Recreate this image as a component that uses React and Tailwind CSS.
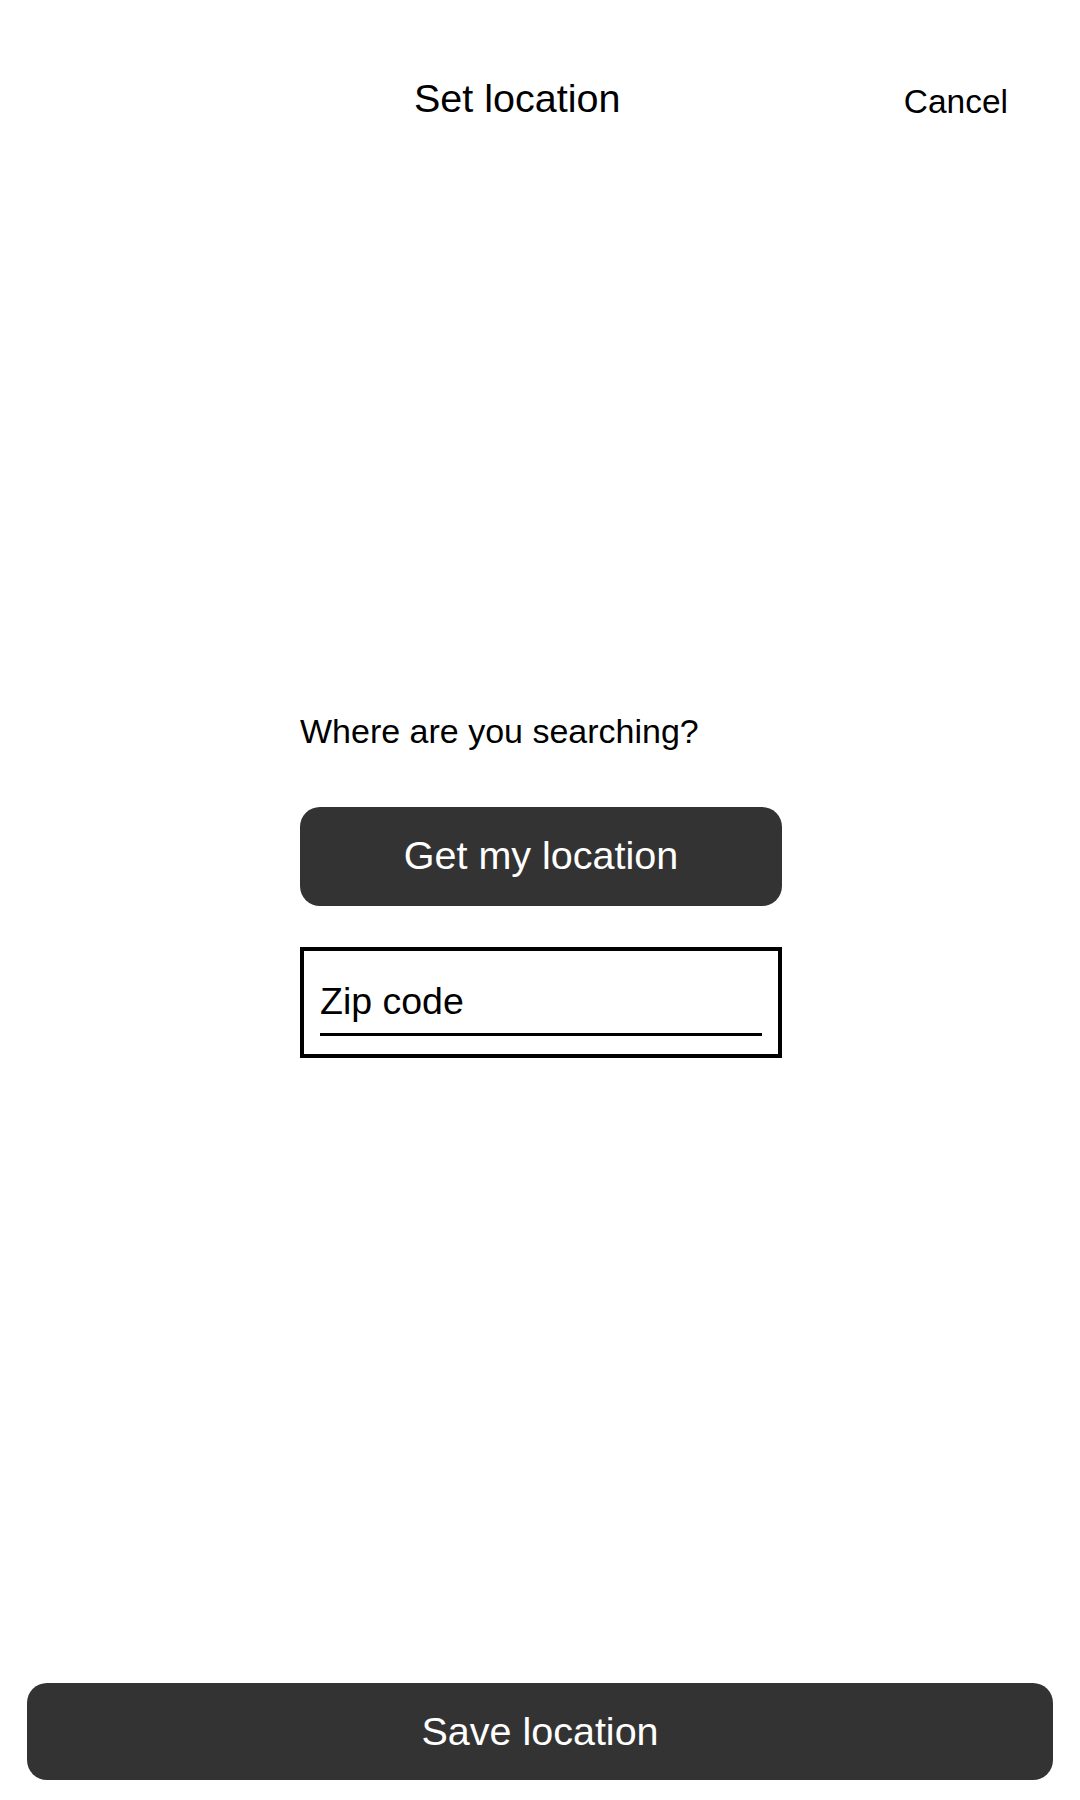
import React from 'react';

// Set location sheet: header, location prompt, zip input, save action
export default function App() {
    return (
        <div className="min-h-[1800px] flex flex-col bg-white text-black font-['Liberation_Sans',Arial,sans-serif]">
            {/* Header */}
            <div className="flex items-start pt-[79px]">
                <h1 className="ml-[414px] text-[39.5px] leading-none font-normal">Set location</h1>
                <button className="ml-auto mr-[72px] mt-[6px] text-[33.5px] leading-none">Cancel</button>
            </div>

            {/* Location prompt */}
            <div className="ml-[300px] w-[482px] mt-[595px] flex flex-col">
                <p className="text-[34px] leading-none">Where are you searching?</p>
                <button className="mt-[59px] h-[99px] rounded-[20px] bg-[#333333] text-white text-[39.5px] leading-none flex items-center justify-center">
                    Get my location
                </button>
                <div className="mt-[41px] h-[111px] border-4 border-black px-[16px] pt-[32px]">
                    <div className="text-[37.5px] leading-none">Zip code</div>
                    <div className="mt-[13px] h-[3px] bg-black" />
                </div>
            </div>

            <div className="flex-1" />

            {/* Save action */}
            <button className="mx-[27px] mb-[20px] h-[97px] rounded-[20px] bg-[#333333] text-white text-[39.5px] leading-none flex items-center justify-center">
                Save location
            </button>
        </div>
    );
}
